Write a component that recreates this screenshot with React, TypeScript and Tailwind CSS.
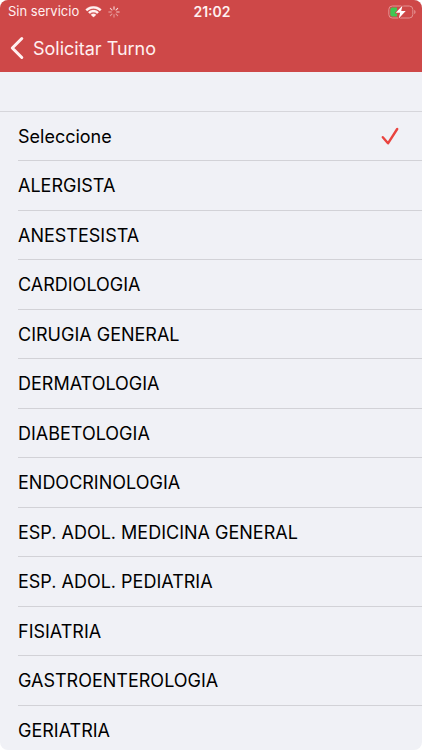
import React, { useState } from 'react';

const SPECIALTIES = [
  'Seleccione',
  'ALERGISTA',
  'ANESTESISTA',
  'CARDIOLOGIA',
  'CIRUGIA GENERAL',
  'DERMATOLOGIA',
  'DIABETOLOGIA',
  'ENDOCRINOLOGIA',
  'ESP. ADOL. MEDICINA GENERAL',
  'ESP. ADOL. PEDIATRIA',
  'FISIATRIA',
  'GASTROENTEROLOGIA',
  'GERIATRIA',
];

function WifiIcon() {
  return (
    <svg viewBox="0 0 17 12" className="w-[17px] h-3" fill="currentColor" stroke="currentColor" strokeWidth="0.3" aria-hidden="true">
      <path d="M8.5 2.4c2.3 0 4.5.9 6.1 2.5.1.1.3.1.4 0l1.2-1.2c.1-.1.1-.3 0-.4C12-.8 5-.8.8 3.3c-.1.1-.1.3 0 .4L2 4.9c.1.1.3.1.4 0 1.6-1.6 3.8-2.5 6.1-2.500z" />
      <path d="M8.500 6.300c1.300 0 2.500.500 3.400 1.300.1.1.3.1.4 0l1.200-1.200c.1-.1.1-.3 0-.4-2.800-2.600-7.200-2.600-10 0-.1.1-.1.3 0 .4l1.200 1.200c.1.1.3.1.4 0 .9-.8 2.100-1.300 3.400-1.300z" />
      <path d="M10.900 8.900c.1-.1.1-.3 0-.4-1.400-1.100-3.400-1.100-4.800 0-.1.1-.1.3 0 .4l2.200 2.200c.1.1.3.1.4 0z" />
    </svg>
  );
}

const SPOKES = [1, 0.9, 0.8, 0.5, 0.5, 0.5, 0.6, 0.8];

function Spinner() {
  return (
    <svg viewBox="0 0 12 12" className="size-3" stroke="currentColor" strokeWidth="1" strokeLinecap="round" aria-hidden="true">
      {SPOKES.map((opacity, i) => (
        <path key={i} d="M6 .8v2.500" opacity={opacity} transform={`rotate(${i * 45} 6 6)`} />
      ))}
    </svg>
  );
}

function BatteryIcon() {
  return (
    <svg viewBox="0 0 28 14" className="w-7 h-3.5" fill="none" aria-hidden="true">
      <rect x="0.800" y="1" width="24" height="12" rx="3.500" stroke="#e39292" />
      <path d="M26.200 5v4c.9-.3 1.300-1.100 1.300-2s-.4-1.700-1.300-2z" fill="#e39292" />
      <path d="M4.300 2.500H9v9H4.300a2 2 0 0 1-2-2v-5a2 2 0 0 1 2-2z" fill="#3fc653" />
      <path d="M14.500.6 7.800 7.700h4.400L10.700 13.400l7-7.300h-4.500z" fill="#fff" stroke="#ce4848" strokeWidth="1.600" strokeLinejoin="round" paintOrder="stroke" />
    </svg>
  );
}

export default function App() {
  const [selected, setSelected] = useState('Seleccione');

  return (
    <div className="h-screen flex flex-col overflow-hidden rounded-lg bg-[#f0f1f6] font-['Inter','Liberation_Sans',sans-serif] text-black">
      <header className="shrink-0 bg-[#ce4848] text-[#fff0f0]">
        {/* Status bar */}
        <div className="grid grid-cols-3 items-center h-6 pl-2 pr-1.5 text-[13px]">
          <div className="flex items-center gap-1.5 whitespace-nowrap">
            <span>Sin servicio</span>
            <WifiIcon />
            <Spinner />
          </div>
          <span className="text-center text-sm font-semibold">21:02</span>
          <div className="flex justify-end">
            <BatteryIcon />
          </div>
        </div>
        <div className="h-12 px-2.5">
          <button type="button" className="flex items-center gap-[9px] h-full text-[18px]">
            <svg viewBox="0 0 14 24" className="w-3.5 h-6" fill="none" stroke="currentColor" strokeWidth="3" strokeLinecap="round" strokeLinejoin="round" aria-hidden="true">
              <path d="M11.800 2.500 2.300 12l9.500 9.500" />
            </svg>
            <h1>Solicitar Turno</h1>
          </button>
        </div>
      </header>

      <div role="radiogroup" aria-label="Especialidad" className="flex-1 min-h-0 pt-[39px] overflow-y-auto [scrollbar-width:none]">
        <div className="border-t border-[#d6d6db]">
          {SPECIALTIES.map(name => (
            <label key={name} className="flex pl-[18px] odd:h-[49px] even:h-[50px] text-[18px]">
              <span className="flex-1 flex items-center border-b border-[#d2d2d7]">
                <span className="flex-1">{name}</span>
                <input
                  type="radio"
                  name="specialty"
                  value={name}
                  checked={selected === name}
                  onChange={() => setSelected(name)}
                  className="peer appearance-none"
                />
                <svg viewBox="0 0 20 20" className="size-5 mr-[22px] text-[#e9443f] invisible peer-checked:visible" fill="none" stroke="currentColor" strokeWidth="2.400" strokeLinecap="round" strokeLinejoin="round" aria-hidden="true">
                  <path d="M2.800 11.200 8 17.300 17.200 3" />
                </svg>
              </span>
            </label>
          ))}
        </div>
      </div>
    </div>
  );
}
